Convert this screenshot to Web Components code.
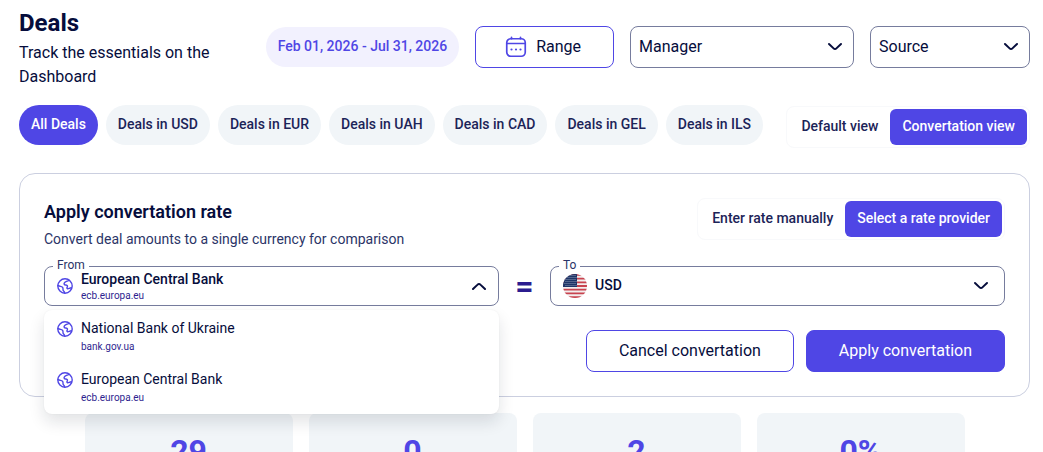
<!DOCTYPE html>
<html lang="en">
<head>
<meta charset="utf-8">
<title>Deals</title>
<style>
  html { scrollbar-width: none; }
  body {
    margin: 0;
    background: #fff;
    color: #060d3c;
    font-family: Roboto, "Liberation Sans", sans-serif;
    font-size: 14px;
    line-height: 20px;
    --primary: #4f46e5;
    --ink: #060d3c;
    --ink-soft: #1c2458;
    --outline: #767c9d;
    --surface: #f1f5f8;
  }
</style>
</head>
<body>
<deals-page></deals-page>

<script>
const define = (name, html, setup) => {
  const template = document.createElement('template');
  template.innerHTML = html;
  customElements.define(name, class extends HTMLElement {
    constructor() {
      super();
      this.attachShadow({ mode: 'open' }).append(template.content.cloneNode(true));
    }
    connectedCallback() { if (setup) setup(this, this.shadowRoot); }
  });
};

/* ---------- icons ---------- */
define('icon-chevron', `
  <style>
    :host { display: block; width: 16px; height: 16px; color: var(--ink); }
    :host([up]) { transform: rotate(180deg); }
    svg { display: block; }
  </style>
  <svg width="16" height="16" viewBox="0 0 16 16" fill="none" stroke="currentColor" stroke-width="2" stroke-linecap="round" stroke-linejoin="round" aria-hidden="true"><path d="M2 5l4.6 4.4c.8.8 2 .8 2.8 0L14 5"/></svg>`);

define('icon-calendar', `
  <style>:host { display: block; width: 24px; height: 24px; color: var(--primary); } svg { display: block; }</style>
  <svg width="24" height="24" viewBox="0 0 24 24" fill="none" stroke="currentColor" stroke-width="1.7" stroke-linecap="round" stroke-linejoin="round" aria-hidden="true">
    <rect x="2.75" y="3.75" width="18.5" height="17.5" rx="4"/>
    <path d="M7.5 2.25v1.5M16.5 2.25v1.5M3 8.5h18"/>
    <path stroke-width="2.200" d="M7.5 14.500h.01M12 14.500h.01M16.500 14.500h.01"/>
  </svg>`);

define('icon-globe', `
  <style>:host { display: block; width: 16px; height: 16px; color: var(--primary); } svg { display: block; }</style>
  <svg width="16" height="16" viewBox="0 0 16 16" fill="none" stroke="currentColor" stroke-width="1.4" stroke-linecap="round" stroke-linejoin="round" aria-hidden="true">
    <circle cx="8" cy="8" r="7.2"/>
    <path d="M12.2 2.200C11.300 2.900 10.300 3.100 9 3.700 7.300 4.500 6.700 5.500 7.300 6.500 7.900 7.400 9.200 6.700 10.200 7.500 11 8.300 10.200 8.900 9.900 9.900 9.700 11.200 12.400 10.700 14.400 9.700"/>
    <path d="M1 7.200C2.300 8.900 4.300 8 5.500 9.200 6.600 10.300 5.500 11.500 6.300 12.600 6.900 13.400 7.700 13.500 7.600 15"/>
  </svg>`);

define('icon-flag-us', `
  <style>:host { display: block; width: 24px; height: 24px; border-radius: 50%; overflow: hidden; } svg { display: block; }</style>
  <svg width="24" height="24" viewBox="0 0 24 24" aria-hidden="true">
    <rect width="24" height="24" fill="#f3eeee"/>
    <path stroke="#c8434f" stroke-width="1.850" d="M0 .92h24M0 4.620h24M0 8.310h24M0 12h24M0 15.690h24M0 19.380h24M0 23.080h24"/>
    <rect width="14" height="13" fill="#1f3567"/>
    <g stroke="#b3bdd2" stroke-width=".9" stroke-linecap="round" stroke-dasharray="0 2">
      <path d="M2 1.500h12M3 3.500h11M2 5.500h12M3 7.500h11M2 9.500h12M3 11.500h11"/>
    </g>
  </svg>`);

/* ---------- controls ---------- */
define('date-chip', `
  <style>
    :host { display: block; flex: none; padding: 9px 12px 11px; border-radius: 20px; background: #f2f1fe; color: var(--primary); font-weight: 500; white-space: nowrap; }
  </style>
  <slot></slot>`);

define('action-button', `
  <style>
    :host { display: block; flex: none; }
    button { display: flex; align-items: center; justify-content: center; gap: 8px; height: 42px; padding: 0 32px; border: 1px solid var(--primary); border-radius: 8px; background: #fff; color: var(--ink); font: 400 16px/24px Roboto, sans-serif; white-space: nowrap; cursor: pointer; }
    :host([primary]) button { background: var(--primary); color: #fff; }
    :host([with-icon]) button { padding-left: 28px; }
  </style>
  <button type="button"><slot name="icon"></slot><slot></slot></button>`);

define('filter-select', `
  <style>
    :host { display: grid; align-items: center; }
    select { grid-area: 1 / 1; width: 100%; height: 42px; margin: 0; padding: 0 40px 0 8px; border: 1px solid var(--outline); border-radius: 8px; background: #fff; color: var(--ink); font: 400 16px/24px Roboto, sans-serif; appearance: none; cursor: pointer; }
    icon-chevron { grid-area: 1 / 1; justify-self: end; margin-right: 11px; pointer-events: none; }
  </style>
  <select><option></option></select><icon-chevron></icon-chevron>`,
  (host, root) => {
    const label = host.getAttribute('label');
    root.querySelector('select').setAttribute('aria-label', label);
    root.querySelector('option').textContent = label;
  });

define('pill-tab', `
  <style>
    :host { display: block; }
    button { height: 40px; padding: 0 12px 2px; border: 0; border-radius: 20px; background: var(--surface); color: var(--ink-soft); font: 500 14px/20px Roboto, sans-serif; white-space: nowrap; cursor: pointer; }
    :host([active]) button { background: var(--primary); color: #fff; }
  </style>
  <button type="button"><slot></slot></button>`);

define('segment-group', `
  <style>
    :host { display: flex; flex: none; padding: 2px; border: 1px solid #f8f9fb; border-radius: 8px; }
  </style>
  <slot></slot>`);

define('segment-option', `
  <style>
    :host { display: block; }
    button { height: 36px; padding: 0 12px 2px; border: 0; border-radius: 6px; background: transparent; color: var(--ink-soft); font: 500 14px/20px Roboto, sans-serif; white-space: nowrap; cursor: pointer; }
    :host([active]) button { background: var(--primary); color: #fff; }
  </style>
  <button type="button"><slot></slot></button>`,
  (host, root) => root.querySelector('button').setAttribute('aria-pressed', host.hasAttribute('active')));

/* Outlined combobox with a caption set into its top border; the menu slot drops below it. */
define('outlined-combo', `
  <style>
    :host { display: block; position: relative; flex: 1; min-width: 0; }
    label { position: absolute; top: -9px; left: 9px; padding: 0 4px; background: #fff; color: #2b3467; font-size: 12px; line-height: 16px; }
    button { display: flex; align-items: center; gap: 8px; width: 100%; height: 40px; padding: 0 15px 0 12px; border: 1px solid var(--outline); border-radius: 8px; background: #fff; color: var(--ink); font: 500 14px/20px Roboto, sans-serif; text-align: left; cursor: pointer; }
    :host([open]) button { padding-right: 11px; }
    .value { flex: 1; min-width: 0; }
    .menu { position: absolute; z-index: 2; top: 44px; left: 0; right: 0; }
  </style>
  <button id="control" type="button" role="combobox"><slot name="icon"></slot><span class="value"><slot></slot></span><icon-chevron></icon-chevron></button>
  <label for="control"></label>
  <div class="menu"><slot name="menu"></slot></div>`,
  (host, root) => {
    const open = host.hasAttribute('open');
    root.querySelector('label').textContent = host.getAttribute('label');
    root.querySelector('button').setAttribute('aria-expanded', open);
    root.querySelector('icon-chevron').toggleAttribute('up', open);
  });

define('currency-name', `
  <style>:host { display: block; padding-bottom: 2px; }</style>
  <slot></slot>`);

define('bank-name', `
  <style>
    :host { display: block; }
    span { display: block; }
    .site { color: #2f1f8f; font-size: 10px; font-weight: 400; line-height: var(--site-line, 14px); }
  </style>
  <span><slot></slot></span><span class="site"><slot name="site"></slot></span>`);

define('bank-menu', `
  <style>
    :host { display: block; padding: 1px 0; border-radius: 8px; background: #fff; box-shadow: 0 0 2px rgba(15, 23, 42, .06), 0 8px 16px rgba(15, 23, 42, .12); }
  </style>
  <slot></slot>`,
  host => host.setAttribute('role', 'listbox'));

define('bank-option', `
  <style>
    :host { display: flex; align-items: flex-start; gap: 8px; padding: 7px 13px; cursor: pointer; --site-line: 17px; }
    icon-globe { margin-top: 3px; }
  </style>
  <icon-globe></icon-globe><bank-name><slot></slot><slot name="site" slot="site"></slot></bank-name>`,
  host => host.setAttribute('role', 'option'));

define('stat-tile', `
  <style>
    :host { display: block; height: 120px; padding-top: 20px; box-sizing: border-box; border-radius: 8px; background: var(--surface); color: var(--primary); font-size: 32px; font-weight: 700; line-height: 36px; text-align: center; }
  </style>
  <slot></slot>`);

/* ---------- sections ---------- */
define('deals-header', `
  <style>
    :host { display: flex; align-items: center; gap: 16px; }
    .intro { flex: 1; min-width: 0; padding-top: 2px; }
    h1 { margin: 0 0 2px; font-size: 24px; font-weight: 700; line-height: 32px; }
    p { margin: 0; font-size: 16px; line-height: 24px; }
    .manager { flex: 0 1 224px; }
    .source { flex: 0 1 160px; }
  </style>
  <div class="intro"><h1>Deals</h1><p>Track the essentials on the Dashboard</p></div>
  <date-chip>Feb 01, 2026 - Jul 31, 2026</date-chip>
  <action-button with-icon><icon-calendar slot="icon"></icon-calendar>Range</action-button>
  <filter-select class="manager" label="Manager"></filter-select>
  <filter-select class="source" label="Source"></filter-select>`);

define('deals-toolbar', `
  <style>
    :host { display: flex; align-items: center; justify-content: space-between; }
    nav { display: flex; gap: 8px; padding-bottom: 4px; }
  </style>
  <nav aria-label="Currency">
    <pill-tab active>All Deals</pill-tab><pill-tab>Deals in USD</pill-tab><pill-tab>Deals in EUR</pill-tab><pill-tab>Deals in UAH</pill-tab><pill-tab>Deals in CAD</pill-tab><pill-tab>Deals in GEL</pill-tab><pill-tab>Deals in ILS</pill-tab>
  </nav>
  <segment-group><segment-option>Default view</segment-option><segment-option active>Convertation view</segment-option></segment-group>`);

define('rate-card', `
  <style>
    :host { display: block; padding: 24px; border: 1px solid #cbcfe0; border-radius: 16px; }
    .head { display: flex; align-items: flex-start; justify-content: space-between; margin-bottom: 16px; }
    h2 { margin: 0 0 3px; font-size: 18px; font-weight: 600; line-height: 28px; }
    p { margin: 0; color: #2b3467; line-height: 21px; }
    .fields { display: flex; align-items: center; margin-bottom: 24px; }
    .equals { flex: none; width: 51px; color: #2b1c8f; font-size: 32px; font-weight: 700; line-height: 40px; text-align: center; }
    .actions { display: flex; justify-content: flex-end; gap: 12px; }
  </style>
  <div class="head">
    <div><h2>Apply convertation rate</h2><p>Convert deal amounts to a single currency for comparison</p></div>
    <segment-group><segment-option>Enter rate manually</segment-option><segment-option active>Select a rate provider</segment-option></segment-group>
  </div>
  <div class="fields">
    <outlined-combo label="From" open>
      <icon-globe slot="icon"></icon-globe>
      <bank-name>European Central Bank<span slot="site">ecb.europa.eu</span></bank-name>
      <bank-menu slot="menu">
        <bank-option>National Bank of Ukraine<span slot="site">bank.gov.ua</span></bank-option>
        <bank-option>European Central Bank<span slot="site">ecb.europa.eu</span></bank-option>
      </bank-menu>
    </outlined-combo>
    <div class="equals">=</div>
    <outlined-combo label="To"><icon-flag-us slot="icon"></icon-flag-us><currency-name>USD</currency-name></outlined-combo>
  </div>
  <div class="actions">
    <action-button>Cancel convertation</action-button>
    <action-button primary>Apply convertation</action-button>
  </div>`);

define('deals-stats', `
  <style>
    :host { display: grid; grid-template-columns: repeat(4, 1fr); gap: 16px; max-width: 880px; margin: 0 auto; }
  </style>
  <stat-tile>29</stat-tile><stat-tile>0</stat-tile><stat-tile>2</stat-tile><stat-tile>0%</stat-tile>`);

define('deals-page', `
  <style>
    :host { display: block; height: 100vh; box-sizing: border-box; overflow: auto; scrollbar-width: none; padding: 5px 13px 0 19px; }
    deals-toolbar { margin: 16px 0 24px; }
    rate-card { margin-bottom: 16px; }
  </style>
  <deals-header></deals-header>
  <deals-toolbar></deals-toolbar>
  <rate-card></rate-card>
  <deals-stats></deals-stats>`);
</script>
</body>
</html>
